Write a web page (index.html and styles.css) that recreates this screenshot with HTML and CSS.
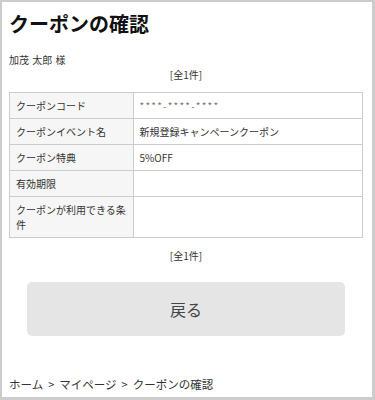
FILE: index.html
```html
<!DOCTYPE html>
<html lang="ja">
<head>
<meta charset="utf-8">
<title>クーポンの確認</title>
<link rel="stylesheet" href="styles.css">
</head>
<body>
<div class="page">
  <h1 class="title">クーポンの確認</h1>
  <p class="name">加茂 太郎 様</p>
  <p class="count">[全1件]</p>
  <table class="coupon">
    <tr><th>クーポンコード</th><td class="code">****-****-****</td></tr>
    <tr><th>クーポンイベント名</th><td>新規登録キャンペーンクーポン</td></tr>
    <tr><th>クーポン特典</th><td>5%OFF</td></tr>
    <tr><th>有効期限</th><td></td></tr>
    <tr><th>クーポンが利用できる条件</th><td></td></tr>
  </table>
  <p class="count count-bottom">[全1件]</p>
  <div class="actions"><button class="back">戻る</button></div>
  <nav class="crumbs">ホーム<span class="sep">&gt;</span>マイページ<span class="sep">&gt;</span>クーポンの確認</nav>
</div>
</body>
</html>
```
FILE: styles.css
```css
html, body {
  margin: 0;
  padding: 0;
  background: #fff;
}
body {
  font-family: "Noto Sans CJK JP", "Noto Sans", sans-serif;
  color: #333;
}
.page {
  box-sizing: border-box;
  width: 375px;
  height: 400px;
  overflow: hidden;
  border-style: solid;
  border-color: #cccccc;
  border-width: 2px 3px 3px 2px;
  padding: 0 9px 0 7px;
}
.title {
  margin: 8px 0 0;
  font-size: 20px;
  line-height: 28px;
  font-weight: bold;
  color: #111;
}
.name {
  margin: 14px 0 0;
  font-size: 10px;
  line-height: 15px;
  word-spacing: 1px;
}
.count {
  margin: 0;
  font-size: 10px;
  line-height: 15px;
  text-align: center;
}
.coupon {
  margin-top: 10px;
  width: 100%;
  border-collapse: collapse;
  font-size: 10px;
  line-height: 15px;
}
.coupon th, .coupon td {
  border: 1px solid #cccccc;
  padding: 5px 6px;
  text-align: left;
  vertical-align: middle;
  font-weight: normal;
}
.coupon th {
  width: 35%;
  background: #f6f6f6;
  box-sizing: border-box;
}
.coupon td.code {
  color: #777;
  letter-spacing: 1.2px;
}
.count-bottom {
  margin-top: 10px;
}
.actions {
  margin-top: 19px;
  display: flex;
  justify-content: center;
}
.back {
  width: 90%;
  height: 54px;
  border: none;
  border-radius: 5px;
  background: #e5e5e5;
  color: #444;
  font-family: inherit;
  font-size: 16px;
}
.crumbs {
  margin-top: 39px;
  font-size: 11.5px;
  line-height: 18px;
  color: #333;
}
.crumbs .sep {
  margin: 0 5px;
  font-size: 11px;
}
```
